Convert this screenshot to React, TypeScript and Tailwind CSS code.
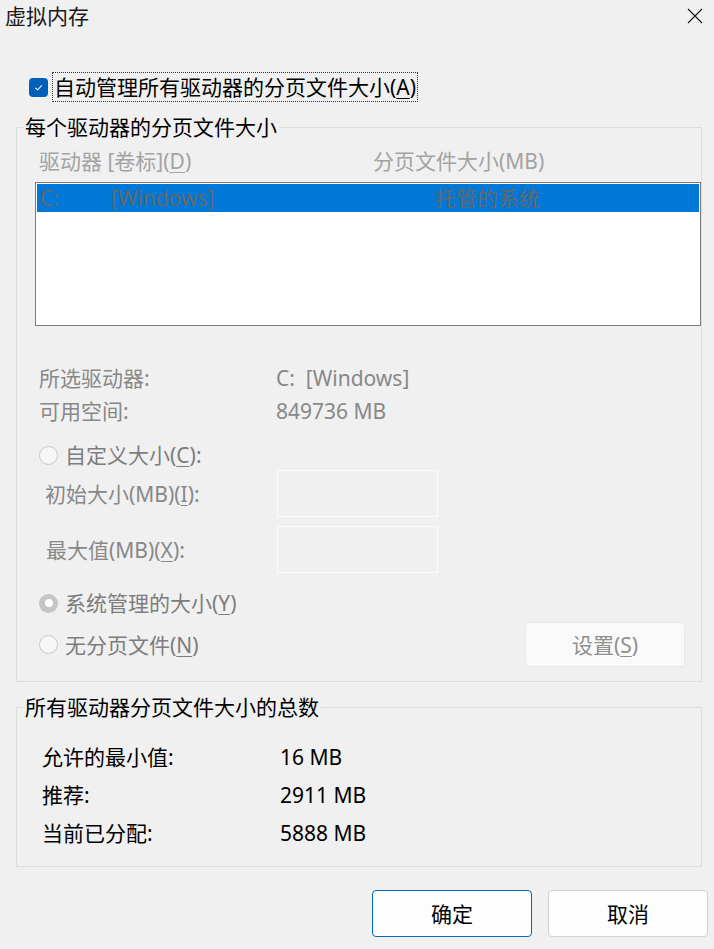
import type { ReactNode } from 'react';

function Key({ children }: { children: ReactNode }) {
  return <u className="underline decoration-1 underline-offset-[3px]">{children}</u>;
}

function Radio({ checked }: { checked?: boolean }) {
  if (checked) {
    return (
      <span className="flex h-[19px] w-[19px] shrink-0 items-center justify-center rounded-full bg-[#c5c5c5]">
        <span className="h-[8px] w-[8px] rounded-full bg-white" />
      </span>
    );
  }
  return <span className="h-[19px] w-[19px] shrink-0 rounded-full border border-[#c8c8c8] bg-[#f7f7f7]" />;
}

function SizeInput({ label, pad }: { label: ReactNode; pad: string }) {
  return (
    <div className="flex h-[47px] items-center">
      <div className={`w-[242px] shrink-0 ${pad} text-[#888888]`}>{label}</div>
      <div className="h-[47px] w-[161px] border border-[#fbfbfb]" />
    </div>
  );
}

export default function App() {
  return (
    <div className="h-[949px] w-[714px] overflow-hidden bg-[#f0f0f0] font-['Noto_Sans','Noto_Sans_CJK_SC',sans-serif] text-[21px] leading-[24px] text-[#1a1a1a]">
      {/* title bar */}
      <div className="flex items-start justify-between pt-[4px]">
        <div className="pl-[5px]">虚拟内存</div>
        <svg viewBox="0 0 16 16" className="mr-[11px] mt-[4px] h-[16px] w-[16px]" aria-hidden="true">
          <path d="M1 1 L15 15 M15 1 L1 15" stroke="#1a1a1a" strokeWidth="1.2" fill="none" />
        </svg>
      </div>

      {/* auto manage checkbox */}
      <div className="mt-[44px] flex h-[30px] items-center">
        <span className="ml-[29px] flex h-[19px] w-[19px] shrink-0 items-center justify-center rounded-[4px] bg-[#005fb8]">
          <svg viewBox="0 0 12 12" className="h-[11px] w-[11px]" aria-hidden="true">
            <path d="M2.5 6.3 L5 8.6 L9.6 3.6" stroke="white" strokeWidth="1.1" fill="none" />
          </svg>
        </span>
        <span className="ml-[4px] border border-dotted border-[#333] px-[1px] py-[2px] text-black">
          自动管理所有驱动器的分页文件大小(<Key>A</Key>)
        </span>
      </div>

      {/* per-drive group */}
      <fieldset className="ml-[16px] mr-[12px] mt-[13px] border border-[#dcdcdc] pb-[14px]">
        <legend className="ml-[6px] px-[2px] leading-[24px] text-black">每个驱动器的分页文件大小</legend>
        <div className="pl-[18px]">
          <div className="mt-[10px] flex h-[24px] text-[#a3a3a3]">
            <div className="w-[338px] shrink-0 pl-[4px]">
              驱动器 [卷标](<Key>D</Key>)
            </div>
            <div>分页文件大小(MB)</div>
          </div>

          <div className="mt-[9px] h-[144px] border border-[#7a7a7a] bg-white p-[1px]">
            <div className="flex h-[28px] items-center bg-[#0078d7] pl-[3px] leading-[28px] text-[#676767]">
              <span className="w-[71px] shrink-0">C:</span>
              <span className="w-[324px] shrink-0">[Windows]</span>
              <span>托管的系统</span>
            </div>
          </div>

          <div className="mt-[40px] flex h-[24px] text-[#888888]">
            <div className="w-[241px] shrink-0 pl-[4px]">所选驱动器:</div>
            <div>C:&nbsp;&nbsp;[Windows]</div>
          </div>
          <div className="mt-[9px] flex h-[24px] text-[#888888]">
            <div className="w-[241px] shrink-0 pl-[4px]">可用空间:</div>
            <div>849736 MB</div>
          </div>

          <div className="mt-[20px] flex h-[24px] items-center gap-[7px] pl-[4px] text-[#7d7d7d]">
            <Radio />
            <span>
              自定义大小(<Key>C</Key>):
            </span>
          </div>

          <div className="mt-[3px]">
            <SizeInput
              pad="pl-[10px]"
              label={
                <>
                  初始大小(MB)(<Key>I</Key>):
                </>
              }
            />
          </div>
          <div className="mt-[9px]">
            <SizeInput
              pad="pl-[11px]"
              label={
                <>
                  最大值(MB)(<Key>X</Key>):
                </>
              }
            />
          </div>

          <div className="mt-[18px] flex h-[24px] items-center gap-[7px] pl-[4px] text-[#7d7d7d]">
            <Radio checked />
            <span>
              系统管理的大小(<Key>Y</Key>)
            </span>
          </div>

          <div className="mt-[7px] flex h-[45px] items-center justify-between">
            <div className="flex items-center gap-[7px] pl-[4px] text-[#7d7d7d]">
              <Radio />
              <span>
                无分页文件(<Key>N</Key>)
              </span>
            </div>
            <button
              type="button"
              className="mr-[16px] flex h-[45px] w-[160px] items-center justify-center rounded-[4px] border border-[#e8e8e8] bg-[#fafafa] text-[#8f8f8f]"
            >
              设置(<Key>S</Key>)
            </button>
          </div>
        </div>
      </fieldset>

      {/* totals group */}
      <fieldset className="ml-[16px] mr-[12px] mt-[13px] border border-[#dcdcdc] pb-[21px]">
        <legend className="ml-[6px] px-[2px] leading-[24px] text-black">所有驱动器分页文件大小的总数</legend>
        <div className="flex flex-col gap-[14px] pl-[25px] pt-[26px] text-black">
          <div className="flex h-[24px]">
            <div className="w-[238px] shrink-0">允许的最小值:</div>
            <div>16 MB</div>
          </div>
          <div className="flex h-[24px]">
            <div className="w-[238px] shrink-0">推荐:</div>
            <div>2911 MB</div>
          </div>
          <div className="flex h-[24px]">
            <div className="w-[238px] shrink-0">当前已分配:</div>
            <div>5888 MB</div>
          </div>
        </div>
      </fieldset>

      {/* dialog buttons */}
      <div className="mr-[6px] mt-[23px] flex justify-end gap-[16px]">
        <button
          type="button"
          className="flex h-[47px] w-[160px] items-center justify-center rounded-[4px] border border-[#0067c0] bg-[#fdfdfd] text-black"
        >
          确定
        </button>
        <button
          type="button"
          className="flex h-[47px] w-[160px] items-center justify-center rounded-[4px] border border-[#d0d0d0] bg-[#fdfdfd] text-black"
        >
          取消
        </button>
      </div>
    </div>
  );
}
